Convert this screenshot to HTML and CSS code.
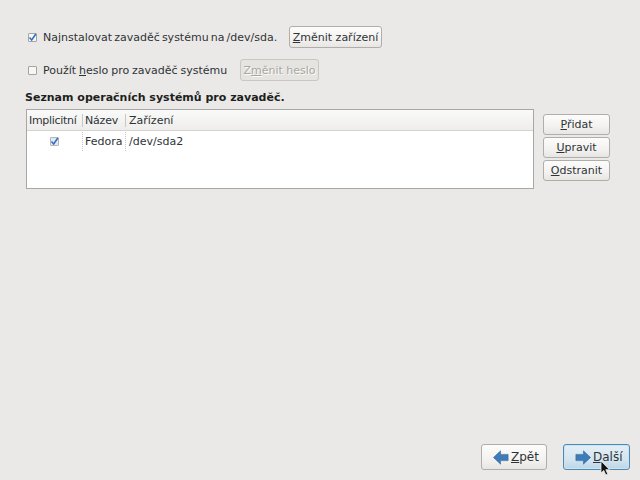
FILE: index.html
```html
<!DOCTYPE html>
<html lang="cs">

<head>
    <meta charset="UTF-8">
    <title>Zavaděč systému</title>
    <link rel="stylesheet" href="styles.css">
</head>

<body>
    <div class="page">
        <div class="content">
            <div class="option-row">
                <span class="check"><svg viewBox="0 0 9 9" width="9" height="9"><path d="M1.5 4.5 L3.7 7 L7.8 1" fill="none" stroke="#2f6fc4" stroke-width="1.5"/></svg></span>
                <span class="option-label option-first">Najnstalovat zavaděč systému na /dev/sda.</span>
                <button class="btn btn-device"><u>Z</u>měnit zařízení</button>
            </div>

            <div class="option-row option-second">
                <span class="check"></span>
                <span class="option-label option-pass">Použít <u>h</u>eslo pro zavaděč systému</span>
                <button class="btn btn-pass" disabled>Z<u>m</u>ěnit heslo</button>
            </div>

            <h2 class="list-title">Seznam operačních systémů pro zavaděč.</h2>

            <div class="list-area">
                <div class="table">
                    <div class="table-head">
                        <div class="col col-default">Implicitní</div>
                        <div class="col col-name">Název</div>
                        <div class="col col-device">Zařízení</div>
                    </div>
                    <div class="table-row">
                        <div class="cell col-default"><span class="check check-cell"><svg viewBox="0 0 9 9" width="9" height="9"><path d="M1.5 4.5 L3.7 7 L7.8 1" fill="none" stroke="#2f6fc4" stroke-width="1.5"/></svg></span></div>
                        <div class="cell col-name">Fedora</div>
                        <div class="cell col-device">/dev/sda2</div>
                    </div>
                </div>
                <div class="side-buttons">
                    <button class="btn btn-side"><u>P</u>řidat</button>
                    <button class="btn btn-side"><u>U</u>pravit</button>
                    <button class="btn btn-side"><u>O</u>dstranit</button>
                </div>
            </div>
        </div>

        <div class="footer">
            <button class="btn btn-nav btn-back">
                <svg viewBox="0 0 18 16" width="16" height="15"><path d="M0.5 8 L8.5 0.5 V4.5 H17 V11.5 H8.5 V15.5 Z" fill="#3d7cb8" stroke="#2f6296" stroke-width="0.6"/></svg>
                <span><u>Z</u>pět</span>
            </button>
            <button class="btn btn-nav btn-next">
                <svg viewBox="0 0 18 16" width="16" height="15"><path d="M17.5 8 L9.5 0.5 V4.5 H1 V11.5 H9.5 V15.5 Z" fill="#3d7cb8" stroke="#2f6296" stroke-width="0.6"/></svg>
                <span><u>D</u>alší</span>
            </button>
        </div>
    </div>

    <svg class="cursor" viewBox="0 0 11 16" width="11" height="16"><path d="M1 1 V13 L3.8 10.4 L5.8 15 L7.8 14 L5.8 9.7 H9.5 Z" fill="#111" stroke="#eee" stroke-width="0.8"/></svg>
</body>

</html>
```

FILE: styles.css
```css
* {
    box-sizing: border-box;
}

html,
body {
    margin: 0;
    height: 100%;
}

body {
    position: relative;
    overflow: hidden;
    background-color: #ebe9e7;
    color: #2e3436;
    font-family: 'DejaVu Sans', sans-serif;
    font-size: 11px;
}

.page {
    height: 480px;
    display: flex;
    flex-direction: column;
    justify-content: space-between;
    padding: 26px 10px 10px 25px;
}

.option-row {
    display: flex;
    align-items: center;
    height: 22px;
    padding-left: 3px;
}

.option-second {
    margin-top: 11px;
}

.check {
    width: 9px;
    height: 9px;
    border: 1px solid #a5a5a0;
    border-radius: 1px;
    background-color: #f6f6f5;
    display: flex;
    overflow: visible;
}

.check svg {
    flex: none;
    margin: -1px;
}

.option-label {
    margin-left: 6px;
    white-space: nowrap;
}

.option-first {
    width: 246px;
    word-spacing: -1.4px;
}

.option-pass {
    width: 197px;
    word-spacing: -0.6px;
}

.btn {
    height: 22px;
    padding: 0;
    border: 1px solid #b0aeaa;
    border-radius: 3px;
    background: linear-gradient(#fcfcfb, #f3f2f0 60%, #e8e6e3);
    color: #2e3436;
    font-family: inherit;
    font-size: 11px;
    white-space: nowrap;
}

.btn-device {
    width: 93px;
}

.btn-pass {
    width: 79px;
    color: #a9a7a3;
    text-shadow: 1px 1px 0 #fbfbfa;
    background: #e6e4e1;
    border-color: #c9c7c3;
}

.list-title {
    margin: 10px 0 5px;
    font-size: 11px;
    line-height: 13px;
    font-weight: bold;
    color: #1c1f20;
}

.list-area {
    display: flex;
    align-items: flex-start;
    padding-left: 1px;
}

.table {
    width: 508px;
    height: 80px;
    border: 1px solid #a9a7a3;
    background-color: #fff;
}

.table-head {
    display: flex;
    height: 21px;
    align-items: center;
    border-bottom: 1px solid #d6d4d1;
    background: linear-gradient(#fafafa, #eeedeb);
}

.table-row {
    display: flex;
    height: 20px;
    padding-top: 1px;
    align-items: center;
}

.col-default {
    width: 55px;
    padding-left: 2px;
    letter-spacing: -0.3px;
}

.col-name {
    width: 43px;
    padding-left: 2px;
    letter-spacing: -0.2px;
}

.col-device {
    flex: 1;
    padding-left: 3px;
}

.col.col-name,
.col.col-device {
    height: 13px;
    line-height: 13px;
    border-left: 1px solid #c9c7c4;
}

.cell {
    height: 19px;
    line-height: 19px;
    white-space: nowrap;
}

.cell.col-default {
    display: flex;
    align-items: center;
    justify-content: center;
    padding: 0 1px 0 0;
}

.cell.col-name {
    border-left: 1px dotted #c4c4c4;
    padding-left: 2px;
    letter-spacing: 0;
}

.cell.col-device {
    border-left: 1px dotted #c4c4c4;
    padding-left: 3px;
}

.check-cell {
    border-color: #b5b5c0;
    background-color: #e6e6ee;
}

.side-buttons {
    display: flex;
    flex-direction: column;
    gap: 2px;
    margin-left: 9px;
    margin-top: 5px;
}

.btn-side {
    width: 67px;
    height: 21px;
}

.footer {
    display: flex;
    justify-content: flex-end;
    gap: 16px;
}

.btn-nav {
    height: 26px;
    display: flex;
    align-items: center;
    gap: 2px;
    padding-left: 11px;
    font-size: 12px;
}

.btn-back {
    width: 66px;
}

.btn-next {
    width: 67px;
    border: 1px solid #4a8ab5;
    background: linear-gradient(#e4eff6, #d4e5f0 60%, #bcd6e6);
    box-shadow: inset 0 0 0 1px #cfe2ee;
}

.cursor {
    position: absolute;
    left: 600px;
    top: 460px;
}
```
